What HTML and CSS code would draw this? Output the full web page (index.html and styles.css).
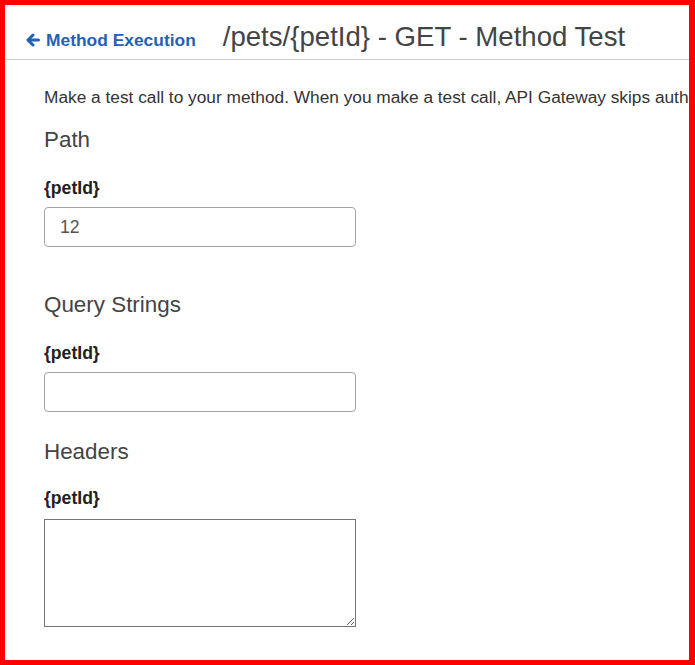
FILE: index.html
```html
<!DOCTYPE html>
<html lang="en">
<head>
    <meta charset="UTF-8">
    <meta name="viewport" content="width=device-width, initial-scale=1.0">
    <title>Method Test</title>
    <link rel="stylesheet" href="styles.css">
</head>
<body>
    <div class="frame">
        <!-- Header -->
        <div class="header">
            <a href="#" class="back-link">
                <svg class="back-icon" width="14" height="14" viewBox="0 0 14 14">
                    <path d="M7 2 L2 7 L7 12" fill="none" stroke="currentColor" stroke-width="3" stroke-linecap="round" stroke-linejoin="round"/>
                    <path d="M2.5 7 H12.5" fill="none" stroke="currentColor" stroke-width="3" stroke-linecap="round"/>
                </svg>
                Method Execution
            </a>
            <h1 class="title">/pets/{petId} - GET - Method Test</h1>
        </div>

        <!-- Test Form -->
        <div class="content">
            <p class="intro">Make a test call to your method. When you make a test call, API Gateway skips authorization and directly invokes your method.</p>

            <div class="section section-path">
                <h2>Path</h2>
                <label class="field-label">{petId}</label>
                <input type="text" class="text-input" value="12">
            </div>

            <div class="section section-query">
                <h2>Query Strings</h2>
                <label class="field-label">{petId}</label>
                <input type="text" class="text-input">
            </div>

            <div class="section section-headers">
                <h2>Headers</h2>
                <label class="field-label">{petId}</label>
                <textarea class="text-area"></textarea>
            </div>
        </div>
    </div>
</body>
</html>
```

FILE: styles.css
```css
/* Basic Reset */
body {
    margin: 0;
    font-family: "Liberation Sans", Arial, sans-serif;
    background-color: #fff;
    color: #333;
}

.frame {
    height: 665px;
    box-sizing: border-box;
    border: 5px solid #ff0000;
    border-right-width: 6px;
    overflow: hidden;
}

/* Header */
.header {
    display: flex;
    align-items: baseline;
    padding: 16px 0 6px 21px;
    border-bottom: 1px solid #ccc;
    white-space: nowrap;
}

.back-link {
    display: flex;
    align-items: baseline;
    gap: 6px;
    font-size: 17.4px;
    font-weight: bold;
    color: #1f62b4;
    text-decoration: none;
    margin-right: 27px;
}

.back-icon {
    position: relative;
    top: 1px;
}

.title {
    margin: 0;
    font-size: 27.6px;
    line-height: 32px;
    font-weight: normal;
    color: #444;
}

/* Content */
.content {
    padding: 25px 0 0 39px;
}

.intro {
    margin: 0;
    font-size: 17.3px;
    line-height: 24px;
    white-space: nowrap;
    color: #333;
}

.section h2 {
    margin: 0;
    font-size: 22.4px;
    line-height: 26px;
    font-weight: normal;
    color: #444;
}

.field-label {
    display: block;
    font-size: 17.6px;
    line-height: 22px;
    font-weight: bold;
    color: #222;
    margin-bottom: 8px;
}

.section-path {
    margin-top: 18px;
}

.section-query {
    margin-top: 45px;
}

.section-headers {
    margin-top: 27px;
}

.section-path h2,
.section-query h2 {
    margin-bottom: 24px;
}

.section-headers h2 {
    margin-bottom: 22px;
}

.section-headers .field-label {
    margin-bottom: 10px;
}

.text-input {
    display: block;
    box-sizing: border-box;
    width: 312px;
    height: 40px;
    padding: 0 15px;
    border: 1px solid #a3a3a3;
    border-radius: 4px;
    font-family: inherit;
    font-size: 17.6px;
    color: #555;
}

.text-area {
    display: block;
    box-sizing: border-box;
    width: 312px;
    height: 108px;
    margin: 0;
    border: 1px solid #767676;
    border-radius: 0;
    font-family: inherit;
}
```
